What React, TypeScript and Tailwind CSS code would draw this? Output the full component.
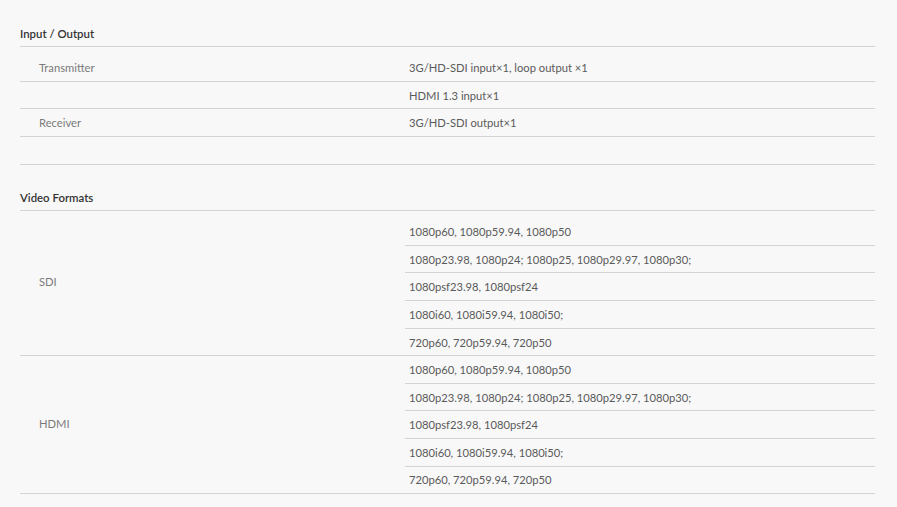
const ioRows = [
  { label: "Transmitter", value: "3G/HD-SDI input×1, loop output ×1" },
  { label: "", value: "HDMI 1.3 input×1" },
  { label: "Receiver", value: "3G/HD-SDI output×1" },
  { label: "", value: "" },
];

const formats = [
  "1080p60, 1080p59.94, 1080p50",
  "1080p23.98, 1080p24; 1080p25, 1080p29.97, 1080p30;",
  "1080psf23.98, 1080psf24",
  "1080i60, 1080i59.94, 1080i50;",
  "720p60, 720p59.94, 720p50",
];

const groups = [
  { label: "SDI", values: formats, padTop: true },
  { label: "HDMI", values: formats, padTop: false },
];

const SectionTitle = ({ title }: { title: string }) => (
  <div className="h-[25px] flex items-center border-b border-[#d4d4d4] text-[11.4px] font-semibold text-[#333]">
    {title}
  </div>
);

export default function App() {
  return (
    <div
      className="min-h-[507px] w-full bg-[#f8f8f8] pl-5 pr-[22px] pt-[21.5px]"
      style={{ fontFamily: "Lato, 'Liberation Sans', sans-serif" }}
    >
      <SectionTitle title="Input / Output" />
      <div className="pt-[7.7px]">
        {ioRows.map((row, i) => (
          <div
            key={i}
            className="flex h-[27.6px] items-center border-b border-[#d4d4d4] text-[11.2px] pt-[2px]"
          >
            <div className="w-[385px] pl-[19px] text-[#7a7a7a]">{row.label}</div>
            <div className="flex-1 pl-[4px] text-[#5a5a5a]">{row.value}</div>
          </div>
        ))}
      </div>

      <div className="mt-[21px]">
        <SectionTitle title="Video Formats" />
        {groups.map((g) => (
          <div
            key={g.label}
            className="flex border-b border-[#d4d4d4] text-[11.2px]"
          >
            <div className="w-[385px] pl-[19px] flex items-center text-[#7a7a7a]">
              {g.label}
            </div>
            <div className={`flex-1 ${g.padTop ? "pt-[7.7px]" : ""}`}>
              {g.values.map((v, i) => {
                const last = i === g.values.length - 1;
                return (
                  <div
                    key={i}
                    className={`flex items-center pl-[4px] pt-[2px] text-[#5a5a5a] ${
                      last ? "h-[26.6px]" : "h-[27.6px] border-b border-[#d4d4d4]"
                    }`}
                  >
                    {v}
                  </div>
                );
              })}
            </div>
          </div>
        ))}
      </div>
    </div>
  );
}
